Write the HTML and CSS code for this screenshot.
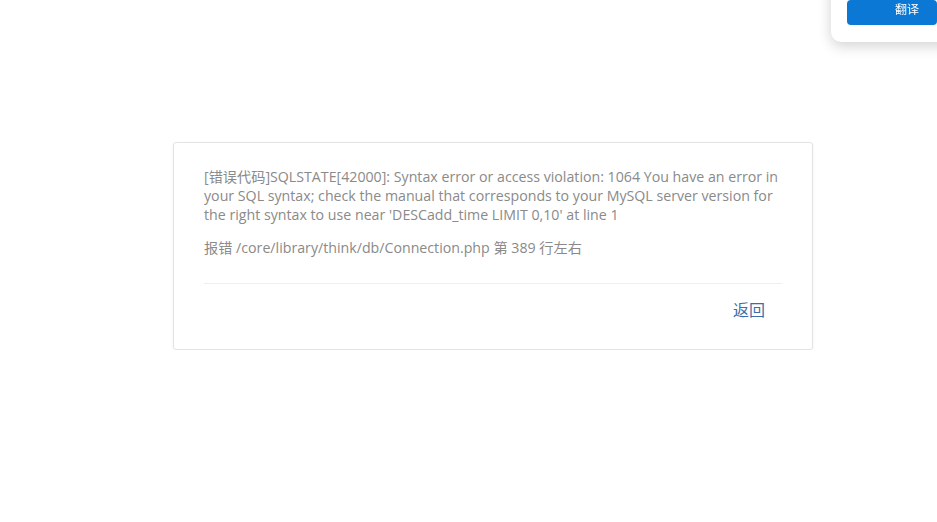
FILE: index.html
```html
<!DOCTYPE html>
<html lang="zh-CN">

<head>
    <meta charset="UTF-8">
    <title>系统发生错误</title>
    <link rel="stylesheet" href="styles.css">
</head>

<body>

    <div class="page">
        <div class="error-card">
            <p class="error-msg">[错误代码]SQLSTATE[42000]: Syntax error or access violation: 1064 You have an error in your SQL syntax; check the manual that corresponds to your MySQL server version for the right syntax to use near 'DESCadd_time LIMIT 0,10' at line 1</p>
            <p class="error-file">报错 /core/library/think/db/Connection.php 第 389 行左右</p>
            <div class="card-footer">
                <a href="javascript:history.back()" class="btn-back">返回</a>
            </div>
        </div>
    </div>

    <div class="translate-pop">
        <button class="btn-translate">翻译</button>
    </div>

</body>

</html>
```

FILE: styles.css
```css
* {
    box-sizing: border-box;
}

body {
    margin: 0;
    padding: 0;
    background: #fff;
    font-family: "Open Sans", "Noto Sans CJK SC", sans-serif;
}

.page {
    padding-top: 142px;
    padding-left: 173px;
}

.error-card {
    width: 640px;
    padding: 24px 30px 22px;
    border: 1px solid #e3e3e3;
    border-radius: 3px;
    box-shadow: 0 1px 3px rgba(0, 0, 0, 0.06);
}

.error-msg,
.error-file {
    margin: 0 -3px 0 0;
    font-size: 14.2px;
    line-height: 19px;
    color: #8a8a8a;
}

.error-file {
    margin-top: 14px;
}

.card-footer {
    margin-top: 26px;
    padding-top: 9px;
    border-top: 1px solid #eee;
    text-align: right;
}

.btn-back {
    display: inline-block;
    padding: 6px 17px;
    font-size: 16px;
    line-height: 22px;
    color: #3a6ea5;
    text-decoration: none;
}

.translate-pop {
    position: fixed;
    top: -20px;
    right: -20px;
    padding: 20px 20px 17px 16px;
    background: #fff;
    border-radius: 10px;
    box-shadow: 0 4px 14px rgba(0, 0, 0, 0.18);
}

.btn-translate {
    display: block;
    width: 90px;
    height: 25px;
    padding: 0 0 7px 48px;
    border: none;
    border-radius: 4px;
    background: #0a78d4;
    color: #fff;
    font-size: 12px;
    line-height: 18px;
    text-align: left;
    font-family: "Noto Sans CJK SC", sans-serif;
}
```
